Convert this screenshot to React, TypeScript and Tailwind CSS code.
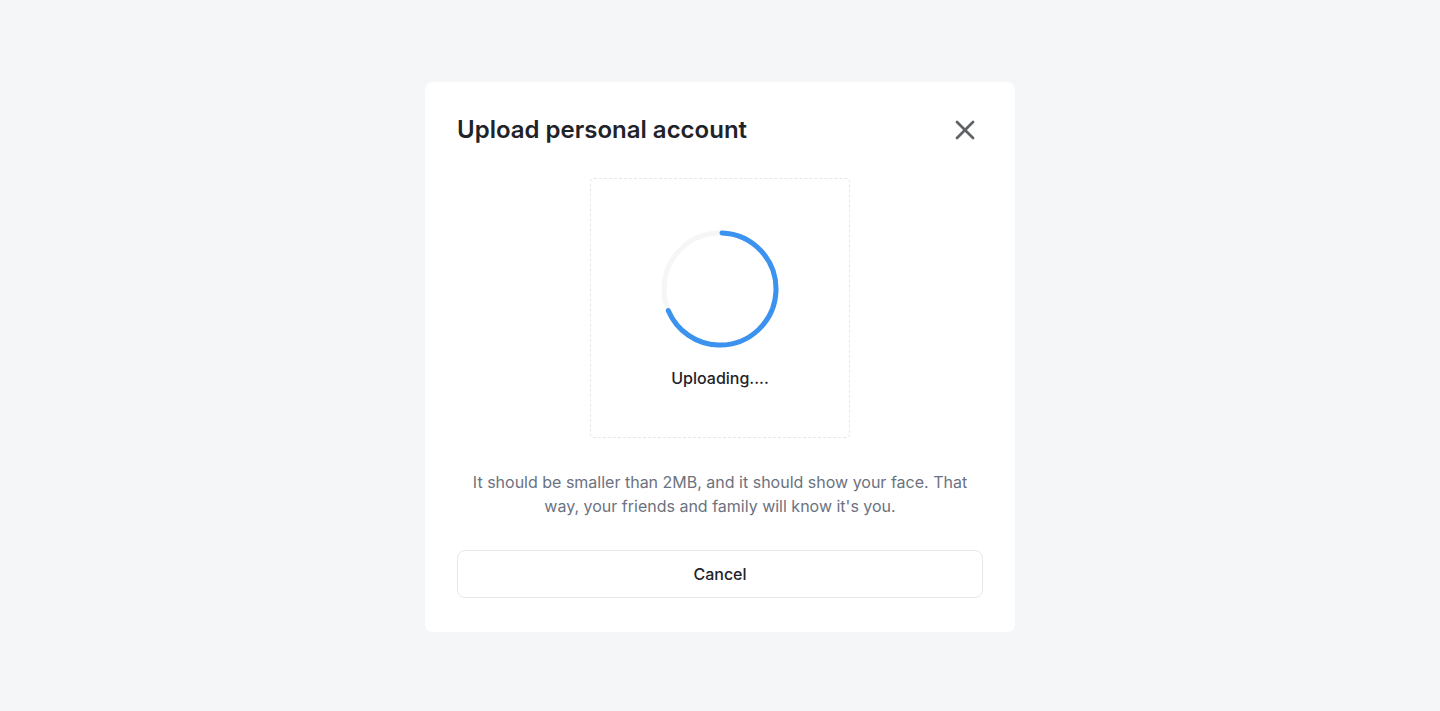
import { X } from "lucide-react";

export default function App() {
  const r = 56;
  const c = 2 * Math.PI * r;
  const progress = 0.68;

  return (
    <div
      className="flex min-h-[711px] w-full justify-center bg-[#f5f6f8] pt-[82px]"
      style={{ fontFamily: "Inter, 'Noto Sans', sans-serif" }}
    >
      <div className="flex h-fit w-[590px] flex-col rounded-lg bg-white px-8 pt-8 pb-[34px]">
        <div className="flex items-center justify-between">
          <h2 className="text-2xl leading-8 font-semibold text-[#1f2329]">Upload personal account</h2>
          <button className="mr-[2px] text-[#5f6368]">
            <X className="h-8 w-8" strokeWidth={2} />
          </button>
        </div>

        <div className="mt-8 flex justify-center">
          <div className="flex h-[260px] w-[260px] flex-col items-center justify-center rounded border border-dashed border-[#e5e7eb]">
            <svg width="122" height="122" viewBox="0 0 122 122">
              <circle cx="61" cy="61" r={r} fill="none" stroke="#f6f6f7" strokeWidth="5" />
              <circle
                cx="61"
                cy="61"
                r={r}
                fill="none"
                stroke="#3b93ef"
                strokeWidth="5"
                strokeLinecap="round"
                strokeDasharray={`${c * progress} ${c}`}
                transform="rotate(-88 61 61)"
              />
            </svg>
            <p className="mt-[18px] text-base leading-5 font-medium text-[#1f2329]">Uploading....</p>
          </div>
        </div>

        <p className="mt-8 text-center text-base leading-6 text-[#6b7280]">
          It should be smaller than 2MB, and it should show your face. That way, your friends and family will know
          it's you.
        </p>

        <button className="mt-8 h-12 w-full rounded-lg border border-[#e5e7eb] bg-white text-base font-medium text-[#1f2329]">
          Cancel
        </button>
      </div>
    </div>
  );
}
